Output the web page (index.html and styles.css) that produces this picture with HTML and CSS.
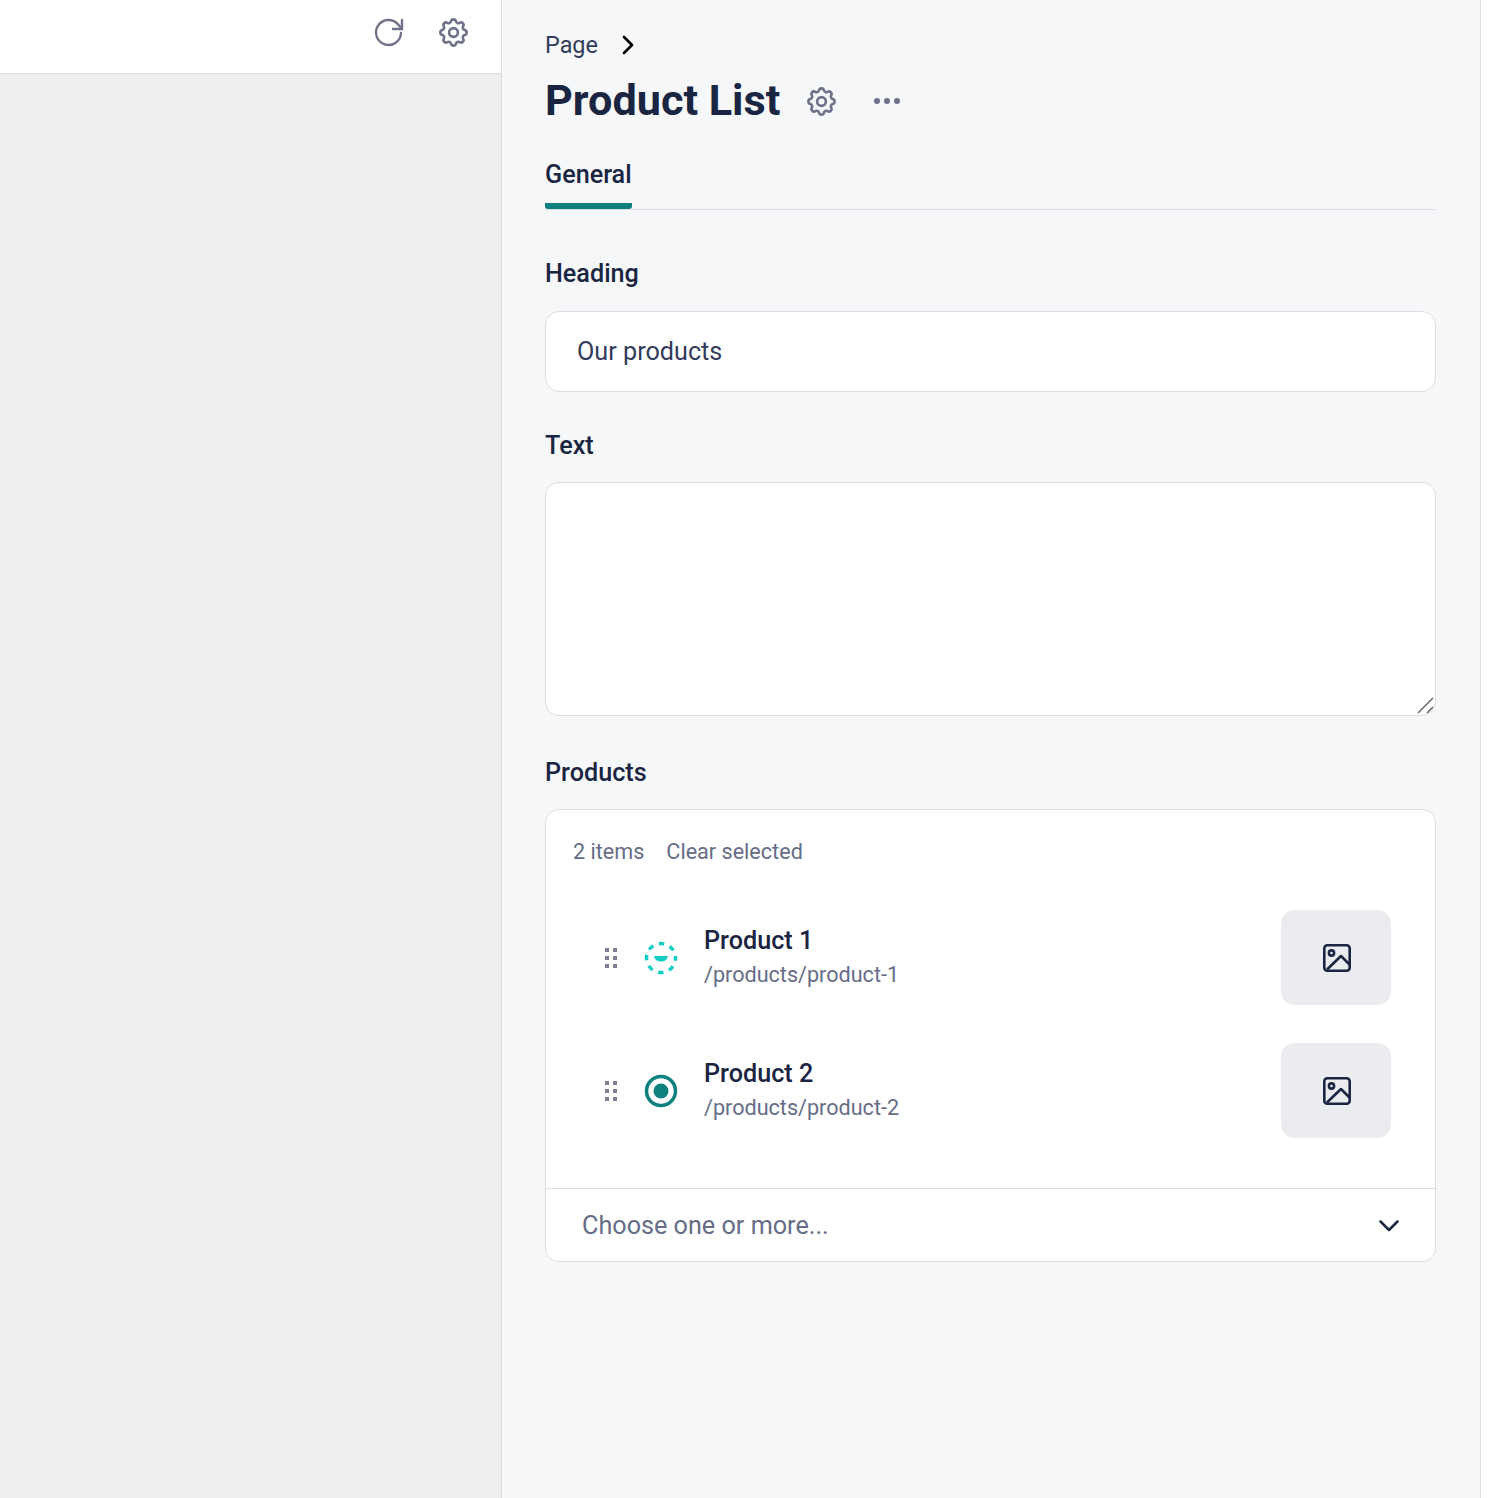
FILE: index.html
```html
<!doctype html>
<html lang="en">
    <head>
        <meta charset="utf-8">
        <title>Product List</title>
        <link rel="stylesheet" href="styles.css">
    </head>
    <body>
        <div class="preview">
            <div class="toolbar">
                <svg class="refresh-icon" viewBox="0 0 32 32"><path d="M29 4v9h-9"/><path d="M28 17A12.500 12.500 0 1 1 24.500 7.800L29 13"/></svg>
                <svg class="cog-icon" viewBox="0 0 24 24"><use href="#cog"/></svg>
            </div>
        </div>
        <div class="editor">
            <div class="crumbs">
                <span>Page</span>
                <svg class="crumb-arrow" viewBox="0 0 24 24"><path d="M8 4l8 8-8 8"/></svg>
            </div>
            <div class="title-row">
                <h1>Product List</h1>
                <svg class="cog-icon title-cog" viewBox="0 0 24 24">
                    <symbol id="cog" viewBox="0 0 24 24">
                        <path d="M10.325 4.317c.426-1.756 2.924-1.756 3.35 0a1.724 1.724 0 002.573 1.066c1.543-.94 3.31.826 2.37 2.37a1.724 1.724 0 001.065 2.572c1.756.426 1.756 2.924 0 3.35a1.724 1.724 0 00-1.066 2.573c.94 1.543-.826 3.31-2.37 2.37a1.724 1.724 0 00-2.572 1.065c-.426 1.756-2.924 1.756-3.35 0a1.724 1.724 0 00-2.573-1.066c-1.543.94-3.31-.826-2.37-2.37a1.724 1.724 0 00-1.065-2.572c-1.756-.426-1.756-2.924 0-3.35a1.724 1.724 0 001.066-2.573c-.94-1.543.826-3.31 2.37-2.37.996.608 2.296.07 2.572-1.065z"/>
                        <circle cx="12" cy="12" r="3"/>
                    </symbol>
                    <use href="#cog"/>
                </svg>
                <div class="dots"><i></i><i></i><i></i></div>
            </div>
            <div class="tabs">
                <span class="tab">General</span>
            </div>

            <label class="field-label heading-label">Heading</label>
            <div class="input">Our products</div>

            <label class="field-label text-label">Text</label>
            <div class="textarea">
                <svg class="resizer" viewBox="0 0 18 18"><path d="M1 16L16 1M10 16l6-6"/></svg>
            </div>

            <label class="field-label products-label">Products</label>
            <div class="picker">
                <div class="picker-head">
                    <span>2 items</span>
                    <span>Clear selected</span>
                </div>
                <div class="picker-list">
                    <div class="product">
                        <svg class="grip" viewBox="0 0 12 20"><use href="#grip"/></svg>
                        <svg class="status" viewBox="0 0 34 34">
                            <circle class="status-dash" cx="17" cy="17" r="14.500"/>
                            <path class="status-smile" d="M10 15h14c-.6 3.600-3.400 5.600-7 5.600s-6.400-2-7-5.600z"/>
                        </svg>
                        <div class="product-text">
                            <div class="product-name">Product 1</div>
                            <div class="product-path">/products/product-1</div>
                        </div>
                        <div class="thumb">
                            <svg class="thumb-icon" viewBox="0 0 28 28"><use href="#picture"/></svg>
                        </div>
                    </div>
                    <div class="product">
                        <svg class="grip" viewBox="0 0 12 20">
                            <symbol id="grip" viewBox="0 0 12 20">
                                <rect x="0" y="0" width="4" height="4"/><rect x="8" y="0" width="4" height="4"/>
                                <rect x="0" y="8" width="4" height="4"/><rect x="8" y="8" width="4" height="4"/>
                                <rect x="0" y="16" width="4" height="4"/><rect x="8" y="16" width="4" height="4"/>
                            </symbol>
                            <use href="#grip"/>
                        </svg>
                        <svg class="status" viewBox="0 0 34 34">
                            <circle class="status-ring" cx="17" cy="17" r="14.500"/>
                            <circle class="status-dot" cx="17" cy="17" r="7.500"/>
                        </svg>
                        <div class="product-text">
                            <div class="product-name">Product 2</div>
                            <div class="product-path">/products/product-2</div>
                        </div>
                        <div class="thumb">
                            <svg class="thumb-icon" viewBox="0 0 28 28">
                                <symbol id="picture" viewBox="0 0 28 28">
                                    <rect x="1.300" y="1.300" width="25.400" height="25.400" rx="3"/>
                                    <circle cx="8.500" cy="9" r="2.600"/>
                                    <path d="M4 25.500L18 12l8.500 8.500"/>
                                </symbol>
                                <use href="#picture"/>
                            </svg>
                        </div>
                    </div>
                </div>
                <div class="picker-select">
                    <span>Choose one or more...</span>
                    <svg class="select-arrow" viewBox="0 0 20 12"><path d="M1.500 1.500L10 10l8.500-8.500"/></svg>
                </div>
            </div>
        </div>
    </body>
</html>
```

FILE: styles.css
```css
html, body { height: 100%; }
body { margin: 0; height: 1498px; overflow: hidden; display: flex; background: #fff; font-family: Roboto, sans-serif; color: #1a2542; }

/*left side*/
.preview { width: 501px; background: #eeeeee; border-right: 1px solid #dcdde2; }
.toolbar { height: 73px; background: #fff; border-bottom: 1px solid #dcdde2; display: flex; align-items: center; justify-content: flex-end; gap: 31px; padding-right: 30px; }
.refresh-icon { width: 32px; height: 32px; margin-top: -9px; fill: none; stroke: #6f7289; stroke-width: 2.400; stroke-linecap: round; stroke-linejoin: round; }
.cog-icon { width: 35px; height: 35px; margin-top: -8px; fill: none; stroke: #6f7289; stroke-width: 1.800; stroke-linecap: round; stroke-linejoin: round; }

/*right side*/
.editor { width: 891px; padding: 0 44px 0 43px; background: #f6f7f9; border-right: 1px solid #dcdde2; }
.crumbs { display: flex; align-items: center; gap: 18px; height: 30px; margin-top: 30px; font-size: 23.400px; line-height: 30px; color: #333c5a; }
.crumb-arrow { width: 24px; height: 24px; fill: none; stroke: #000; stroke-width: 2.600; stroke-linecap: round; stroke-linejoin: round; }
.title-row { display: flex; align-items: center; height: 52px; margin-top: 15px; }
h1 { margin: 0; font-size: 43.200px; line-height: 52px; font-weight: 700; color: #1a2542; }
.title-cog { margin: 0 0 0 24px; }
.dots { display: flex; gap: 4px; margin-left: 35px; }
.dots i { width: 6px; height: 6px; border-radius: 50%; background: #6f7289; }
.tabs { margin-top: 34px; height: 48px; border-bottom: 1px solid #dcdde2; display: flex; }
.tab { height: 48px; box-sizing: border-box; font-size: 25.200px; line-height: 28px; font-weight: 500; color: #1a2542; border-bottom: 6px solid #0c807c; border-radius: 0 0 3px 3px; }

.field-label { display: block; font-size: 25.200px; line-height: 32px; font-weight: 500; color: #1a2542; }
.heading-label { margin-top: 48px; }
.text-label { margin-top: 38px; }
.products-label { margin-top: 41px; }

.input { margin-top: 21px; height: 79px; padding: 0 31px; background: #fff; border: 1px solid #dcdde2; border-radius: 14px; font-size: 25.200px; line-height: 79px; color: #333c5a; }
.textarea { margin-top: 20px; height: 232px; background: #fff; border: 1px solid #dcdde2; border-radius: 14px; display: flex; align-items: flex-end; justify-content: flex-end; }
.resizer { width: 18px; height: 18px; fill: none; stroke: #666; stroke-width: 1.500; }

.picker { margin-top: 20px; background: #fff; border: 1px solid #dcdde2; border-radius: 14px; }
.picker-head { display: flex; gap: 22px; padding: 28px 27px 0; font-size: 21.600px; line-height: 28px; color: #666d87; }
.picker-list { padding: 44px 44px 0 44px; display: flex; flex-direction: column; gap: 38px; }
.product { display: flex; align-items: center; height: 95px; }
.grip { width: 12px; height: 20px; margin-left: 14.500px; fill: #7b7f96; }
.status { width: 34px; height: 34px; margin-left: 27.500px; flex: none; }
.status-dash { fill: none; stroke: #14cdc5; stroke-width: 3.500; stroke-dasharray: 5.500 5.900; stroke-dashoffset: 2.700; }
.status-smile { fill: #14cdc5; }
.status-ring { fill: none; stroke: #0c807c; stroke-width: 3.500; }
.status-dot { fill: #0c807c; }
.product-text { flex: 1; margin-left: 26px; padding-bottom: 2px; }
.product-name { font-size: 25.200px; line-height: 32px; font-weight: 500; color: #1a2542; }
.product-path { font-size: 21.600px; line-height: 28px; margin-top: 4px; color: #666d87; }
.thumb { width: 110px; height: 95px; border-radius: 14px; background: #ebecef; display: flex; align-items: center; justify-content: center; padding-left: 1px; box-sizing: border-box; }
.thumb-icon { width: 28px; height: 28px; fill: none; stroke: #1a2542; stroke-width: 2.600; stroke-linejoin: round; }
.picker-select { margin-top: 50px; height: 72px; border-top: 1px solid #dcdde2; padding: 0 36.500px 0 36px; display: flex; align-items: center; justify-content: space-between; font-size: 25.200px; color: #666d87; }
.select-arrow { width: 20px; height: 12px; margin-top: 1px; fill: none; stroke: #1a2542; stroke-width: 2.500; stroke-linecap: round; stroke-linejoin: round; }
```
